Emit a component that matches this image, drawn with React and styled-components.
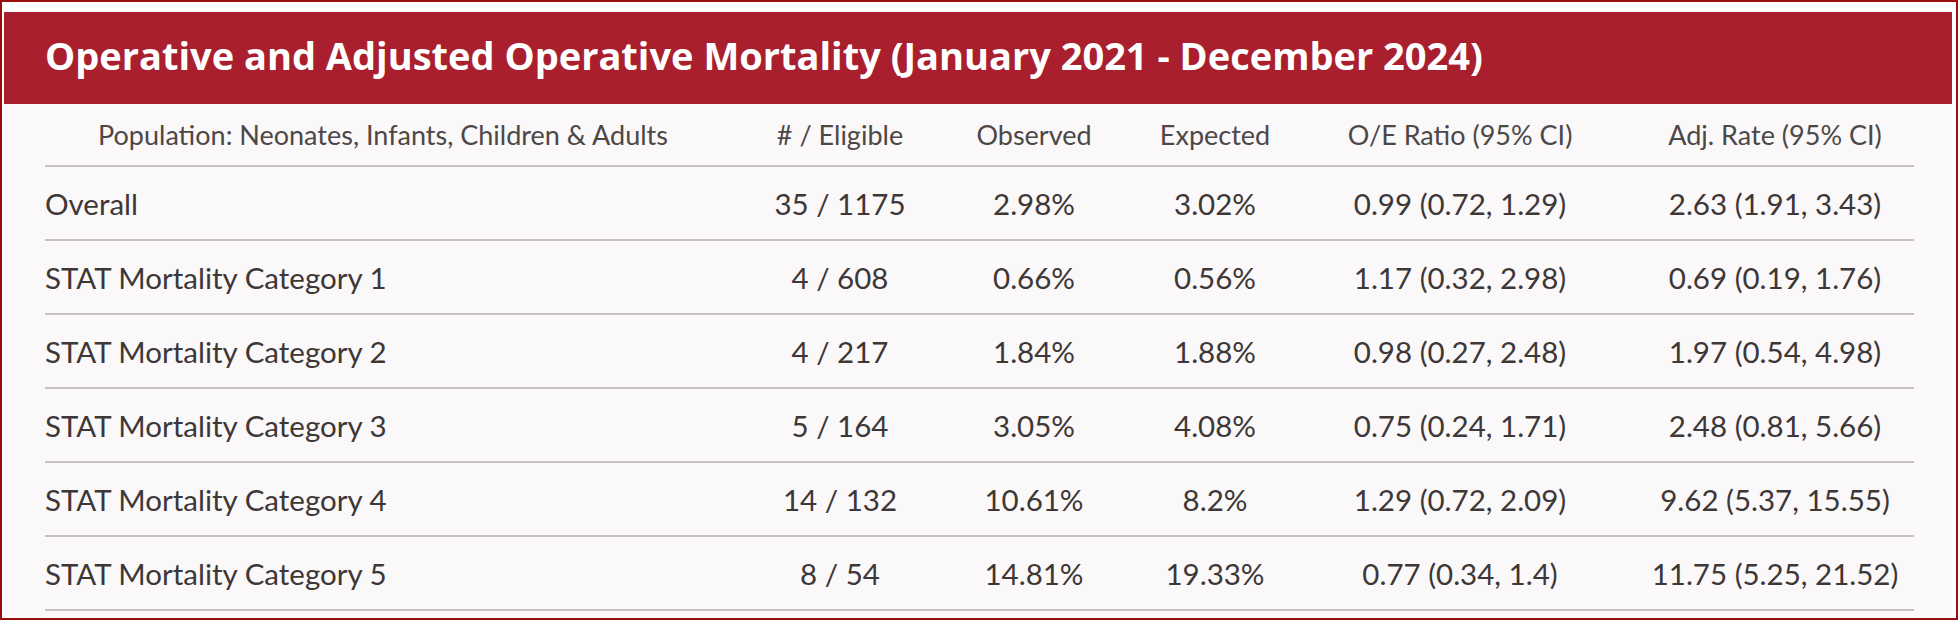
import styled, { createGlobalStyle } from 'styled-components';

const GlobalStyle = createGlobalStyle`
  html, body {
    margin: 0;
    padding: 0;
    background: #ffffff;
  }
  * {
    box-sizing: border-box;
  }
`;

const columns = '676px 238px 150px 212px 278px 1fr';

const rows = [
  ['Overall', '35 / 1175', '2.98%', '3.02%', '0.99 (0.72, 1.29)', '2.63 (1.91, 3.43)'],
  ['STAT Mortality Category 1', '4 / 608', '0.66%', '0.56%', '1.17 (0.32, 2.98)', '0.69 (0.19, 1.76)'],
  ['STAT Mortality Category 2', '4 / 217', '1.84%', '1.88%', '0.98 (0.27, 2.48)', '1.97 (0.54, 4.98)'],
  ['STAT Mortality Category 3', '5 / 164', '3.05%', '4.08%', '0.75 (0.24, 1.71)', '2.48 (0.81, 5.66)'],
  ['STAT Mortality Category 4', '14 / 132', '10.61%', '8.2%', '1.29 (0.72, 2.09)', '9.62 (5.37, 15.55)'],
  ['STAT Mortality Category 5', '8 / 54', '14.81%', '19.33%', '0.77 (0.34, 1.4)', '11.75 (5.25, 21.52)'],
];

const headers = [
  'Population: Neonates, Infants, Children & Adults',
  '# / Eligible',
  'Observed',
  'Expected',
  'O/E Ratio (95% CI)',
  'Adj. Rate (95% CI)',
];

const App = () => {
  return (
    <Frame>
      <GlobalStyle />
      <Card>
        <TitleBar>
          <Title>Operative and Adjusted Operative Mortality (January 2021 - December 2024)</Title>
        </TitleBar>
        <Table>
          <HeadRow>
            {headers.map((h) => (
              <HeadCell key={h}>{h}</HeadCell>
            ))}
          </HeadRow>
          {rows.map((r) => (
            <Row key={r[0]}>
              {r.map((v, i) => (
                <Cell key={i} $first={i === 0} $last={i === r.length - 1}>
                  {v}
                </Cell>
              ))}
            </Row>
          ))}
        </Table>
      </Card>
    </Frame>
  );
};
export default App;

const Frame = styled.div`
  width: 1958px;
  height: 620px;
  border: 2px solid #9b0d0d;
  padding: 10px 4px 1px 2px;
  background: #ffffff;
  display: flex;
  flex-direction: column;
`;

const Card = styled.div`
  flex: 1;
  display: flex;
  flex-direction: column;
  background: #faf8f9;
`;

// bandeau rouge du titre
const TitleBar = styled.div`
  height: 92px;
  background: #aa1f2d;
  display: flex;
  align-items: center;
  padding: 0 0 7px 41px;
`;

const Title = styled.h1`
  margin: 0;
  font-family: 'Open Sans', 'Liberation Sans', sans-serif;
  font-weight: 700;
  font-size: 38px;
  color: #ffffff;
  white-space: nowrap;
`;

const Table = styled.div`
  display: flex;
  flex-direction: column;
  padding: 0 38px 0 41px;
  font-family: Lato, 'Liberation Sans', sans-serif;
`;

const HeadRow = styled.div`
  display: grid;
  grid-template-columns: ${columns};
  align-items: center;
  height: 63px;
  border-bottom: 2px solid #c6c2c2;
`;

const HeadCell = styled.div`
  text-align: center;
  font-size: 27px;
  color: #4d4747;
  white-space: nowrap;
  &:last-child {
    padding-left: 37px;
  }
`;

const Row = styled.div`
  display: grid;
  grid-template-columns: ${columns};
  align-items: center;
  height: 74px;
  border-bottom: 2px solid #c6c2c2;
`;

const Cell = styled.div`
  text-align: ${(p) => (p.$first ? 'left' : 'center')};
  padding-left: ${(p) => (p.$last ? '37px' : '0')};
  font-size: 29.5px;
  color: #3d3737;
  white-space: nowrap;
`;
